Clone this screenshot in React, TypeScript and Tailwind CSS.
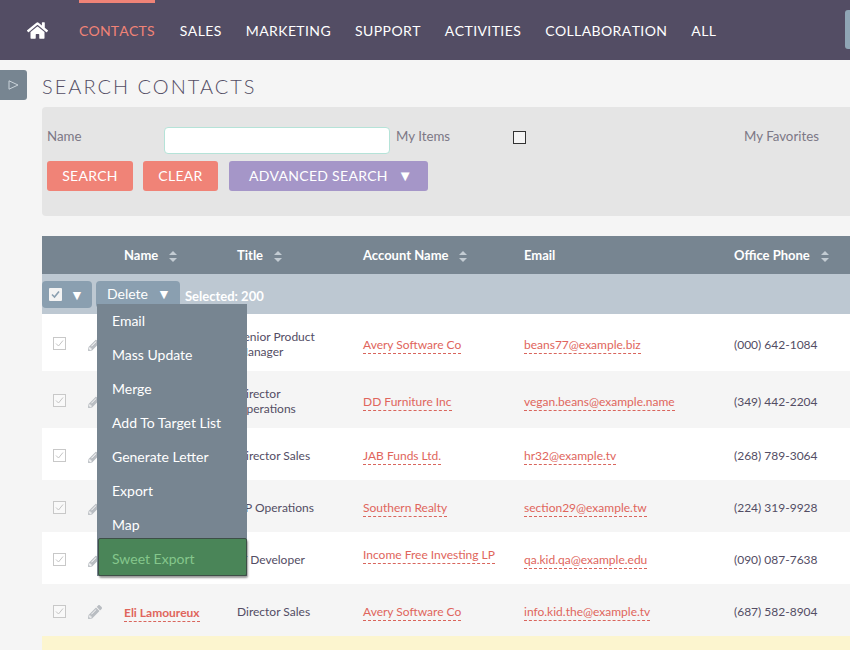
import React from 'react'
import { FaHome, FaPencilAlt } from 'react-icons/fa'

const navItems = ['SALES', 'MARKETING', 'SUPPORT', 'ACTIVITIES', 'COLLABORATION', 'ALL']

const menuItems = ['Email', 'Mass Update', 'Merge', 'Add To Target List', 'Generate Letter', 'Export', 'Map']

interface ContactRow {
  name?: string
  title: string[]
  account: string
  email: string
  phone: string
  raised?: boolean
}

const rows: ContactRow[] = [
  { title: ['Senior Product', 'Manager'], account: 'Avery Software Co', email: 'beans77@example.biz', phone: '(000) 642-1084' },
  { title: ['Director', 'Operations'], account: 'DD Furniture Inc', email: 'vegan.beans@example.name', phone: '(349) 442-2204' },
  { title: ['Director Sales'], account: 'JAB Funds Ltd.', email: 'hr32@example.tv', phone: '(268) 789-3064' },
  { title: ['VP Operations'], account: 'Southern Realty', email: 'section29@example.tw', phone: '(224) 319-9928' },
  { title: ['IT Developer'], account: 'Income Free Investing LP', email: 'qa.kid.qa@example.edu', phone: '(090) 087-7638', raised: true },
  { name: 'Eli Lamoureux', title: ['Director Sales'], account: 'Avery Software Co', email: 'info.kid.the@example.tv', phone: '(687) 582-8904' }
]

const rowHeights = ['h-[57px]', 'h-[57px]', 'h-[52px]', 'h-[52px]', 'h-[52px]', 'h-[52px]']

const SortIcon = () => (
  <svg width="8" height="11" viewBox="0 0 8 11" className="ml-[11px] mt-[1px] shrink-0" fill="#c3ccd3">
    <path d="M4 0 8 4H0z" />
    <path d="M0 7h8l-4 4z" />
  </svg>
)

const HeaderCell = ({ label, width, sort = true }: { label: string; width: string; sort?: boolean }) => (
  <div className={`flex items-center shrink-0 font-bold pt-[2px] ${width}`}>
    {label}
    {sort && <SortIcon />}
  </div>
)

const LinkText = ({ children, className = '' }: { children: React.ReactNode; className?: string }) => (
  <a className={`inline-block leading-[17px] border-b border-dashed border-[#d9655c] text-[#e0655c] ${className}`}>{children}</a>
)

const RowCheckbox = () => (
  <svg width="13" height="13" viewBox="0 0 13 13" fill="none">
    <rect x="0.5" y="0.5" width="12" height="12" fill="#ffffff" fillOpacity="0.4" stroke="#c8c8c8" />
    <path d="M3 6.5 5.5 9 10 3.5" stroke="#c4c4c4" strokeWidth="1" />
  </svg>
)

export default function App() {
  return (
    <div className="relative w-[850px] h-[650px] overflow-hidden bg-[#f5f5f5] text-[12px] text-[#534d64] font-['Lato',sans-serif]">
      {/* Top nav */}
      <div className="flex items-center h-[60px] bg-[#534d64] text-white text-[14px] tracking-[0.4px] [font-kerning:none]">
        <FaHome className="ml-[27px] w-[21px] h-[19px] shrink-0" />
        <div className="relative ml-[31px] h-full flex items-center tracking-[0.2px] text-[#f08377]">
          <div className="absolute top-0 left-0 right-0 h-[3px] bg-[#f08377]" />
          CONTACTS
        </div>
        <div className="flex items-center gap-[24px] ml-[25px]">
          {navItems.map((item) => (
            <span key={item}>{item}</span>
          ))}
        </div>
        <div className="ml-auto w-[5px] h-[39px] mb-[1px] rounded-l-[3px] bg-[#8fa5b5]" />
      </div>

      <div className="flex items-start">
        {/* Sidebar toggle */}
        <div className="flex items-center justify-center w-[27px] h-[30px] mt-[10px] rounded-r-[3px] bg-[#778591] shrink-0">
          <svg width="11" height="10" viewBox="0 0 11 10" fill="none" stroke="#c9d2d9">
            <path d="M1 0.8 10 5 1 9.2z" />
          </svg>
        </div>

        <div className="ml-[15px] flex-1 min-w-0">
          <h1 className="mt-[14px] h-[33px] text-[20px] leading-[25px] font-light tracking-[2px] text-[#534d64]">SEARCH CONTACTS</h1>

          {/* Search form */}
          <div className="h-[109px] rounded-l-[4px] bg-[#e5e5e5] pl-[5px] text-[13.3px] text-[#7c7886]">
            <div className="flex items-start h-[54px] pt-[21px]">
              <span className="w-[117px] leading-[16px]">Name</span>
              <input className="w-[226px] h-[27px] -mt-[1px] rounded-[4px] border border-[#b5e3d8] bg-white" />
              <span className="ml-[6px] w-[117px] leading-[16px]">My Items</span>
              <div className="w-[13px] h-[13px] mt-[3px] border border-[#333333] bg-[#f5f5f5]" />
              <span className="ml-[218px] leading-[16px]">My Favorites</span>
            </div>
            <div className="flex text-white text-[14px] tracking-[0.3px]">
              <button className="flex items-center justify-center w-[86px] h-[30px] pb-[2px] rounded-[3px] bg-[#f08377]">SEARCH</button>
              <button className="flex items-center justify-center w-[75px] h-[30px] pb-[2px] ml-[10px] rounded-[3px] bg-[#f08377]">CLEAR</button>
              <button className="flex items-center justify-center w-[199px] h-[30px] pb-[2px] pl-[5px] ml-[11px] rounded-[3px] bg-[#a596c8]">
                ADVANCED SEARCH
                <span className="ml-[10px] text-[15px] leading-none">▼</span>
              </button>
            </div>
          </div>

          {/* List header */}
          <div className="flex items-center h-[38px] mt-[20px] bg-[#778591] text-white text-[13px]">
            <div className="w-[82px] shrink-0" />
            <HeaderCell label="Name" width="w-[113px]" />
            <HeaderCell label="Title" width="w-[126px]" />
            <HeaderCell label="Account Name" width="w-[161px]" />
            <HeaderCell label="Email" width="w-[210px]" sort={false} />
            <HeaderCell label="Office Phone" width="w-[116px]" />
          </div>

          {/* Actions row */}
          <div className="flex items-start h-[40px] pt-[7px] bg-[#bdc8d2] text-white text-[13px]">
            <div className="flex items-center w-[50px] h-[27px] rounded-[4px] bg-[#8a9fb0] pl-[7px]">
              <svg width="13" height="13" viewBox="0 0 13 13">
                <rect width="13" height="13" rx="1" fill="#f3f3f3" />
                <path d="M3 6.5 5.5 9 10 3.5" stroke="#8a9fb0" strokeWidth="1.6" fill="none" />
              </svg>
              <span className="ml-[8px] text-[14px] leading-none">▼</span>
            </div>
            <div className="flex items-center w-[84px] h-[27px] pb-[2px] ml-[4px] rounded-[4px] bg-[#8a9fb0] pl-[11px] text-[14px]">
              Delete
              <span className="ml-[9px] text-[14px] leading-none">▼</span>
            </div>
            <span className="ml-[5px] mt-[7px] font-bold leading-[16px]">Selected: 200</span>
          </div>

          {/* Rows */}
          {rows.map((row, i) => (
            <div key={row.email} className={`flex items-center ${rowHeights[i]} ${i % 2 === 0 && i !== 5 ? 'bg-white' : 'bg-[#f5f5f5]'}`}>
              <div className="flex items-center w-[40px] pl-[11px] mt-[2px] shrink-0">
                <RowCheckbox />
              </div>
              <div className="w-[42px] pl-[6px] mt-[3px] shrink-0">
                <FaPencilAlt className="w-[14px] h-[14px] text-[#b9bdc2]" />
              </div>
              <div className="w-[113px] shrink-0 mt-[5px]">
                {row.name && <LinkText className="font-bold">{row.name}</LinkText>}
              </div>
              <div className="w-[126px] shrink-0 mt-[3px] leading-[15px]">
                {row.title.map((line) => (
                  <div key={line}>{line}</div>
                ))}
              </div>
              <div className="w-[161px] shrink-0">
                <LinkText className={row.raised ? 'mb-[6px]' : 'mt-[4px]'}>{row.account}</LinkText>
              </div>
              <div className="w-[210px] shrink-0">
                <LinkText className="mt-[4px]">{row.email}</LinkText>
              </div>
              <div className="w-[116px] shrink-0 mt-[4px]">{row.phone}</div>
            </div>
          ))}
          <div className="h-[20px] bg-[#fcf5cf]" />
        </div>
      </div>

      {/* Actions dropdown */}
      <div className="absolute left-[97px] top-[304px] w-[150px] bg-[#778591] text-white text-[14px]">
        {menuItems.map((item) => (
          <div key={item} className="flex items-center h-[34px] pb-[2px] pl-[15px]">
            {item}
          </div>
        ))}
        <div className="flex items-center h-[38px] -mt-[4px] ml-[1px] pt-[2px] pl-[13px] rounded-[2px] border border-[#3d4f46] bg-[#4a8558] text-[#85c78c] shadow-[1px_2px_2px_rgba(0,0,0,0.4)]">
          Sweet Export
        </div>
      </div>
    </div>
  )
}
